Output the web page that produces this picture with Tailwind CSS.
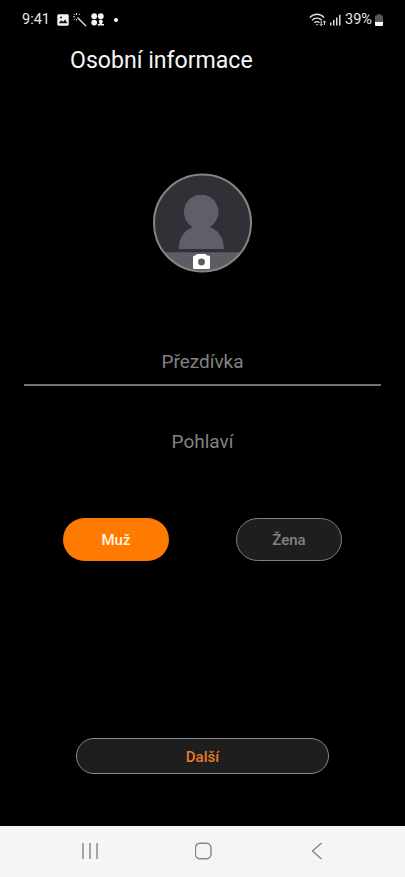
<!DOCTYPE html>
<html lang="cs">
<head>
<meta charset="utf-8">
<title>Osobní informace</title>
<script src="https://cdn.jsdelivr.net/npm/@tailwindcss/browser@4"></script>
</head>
<body class="bg-black">
<div class="flex h-[877px] w-[405px] flex-col overflow-hidden bg-black font-[Roboto,sans-serif]">
  <!-- Status bar -->
  <header class="flex h-[39px] shrink-0 items-center justify-between pr-[22px] pl-[22px] text-[#e6e6e6]">
    <div class="flex items-center">
      <span class="w-[35px] pt-[2px] text-[14.5px] leading-none whitespace-nowrap">9:41</span>
      <svg class="h-3 w-3" viewBox="0 0 12 12"><rect x=".3" y=".3" width="11.4" height="11.4" rx="1.4" fill="#f2f2f2"/><path d="M1.8 9.2 4 6.2 6 7.8 8.2 5.4 10.4 9.2Z" fill="#111"/><circle cx="4" cy="3.4" r="1" fill="#111"/></svg>
      <svg class="ml-[3px] h-[15px] w-[15px]" viewBox="0 0 15 15" fill="none" stroke="#d8d8d8"><path d="M5.5 5.5 14 14" stroke-width="1.5"/><path d="M4.5 1v2M1 4.8h2M1.6 1.8l1.3 1.3M8 1.8 6.8 3M1.8 8l1.3-1.3M4.5 7v1.5" stroke-width="1"/></svg>
      <svg class="ml-1 h-[13px] w-[13px]" viewBox="0 0 13 13" fill="#f2f2f2"><circle cx="3.2" cy="3.2" r="2.9"/><circle cx="9.8" cy="3.2" r="2.9"/><circle cx="3.2" cy="9.6" r="2.9"/><circle cx="9.8" cy="8.5" r="2"/><path d="M9 9h1.6l.7 2H13v1.6H6.8V11h1.5z"/></svg>
      <span class="ml-[10px] h-1 w-1 rounded-full bg-white"></span>
    </div>
    <div class="flex items-center">
      <svg class="h-[14px] w-[18px]" viewBox="0 0 18 14" fill="none" stroke="#e0e0e0" stroke-width="1.4"><path d="M.8 4.6C4.8.2 11.2.2 15.2 4.6M3 7.2c2.8-2.8 7-2.8 9.8 0M5.4 9.7c1.6-1.5 3.6-1.5 5 0"/><path d="M6.8 11 8 12.4 9.2 11Z" fill="#e0e0e0" stroke="none"/><path d="M12.2 8v4.6M10.8 11.2l1.4 1.4 1.4-1.4M15.4 12V8M14 9.3l1.4-1.4 1.4 1.4" stroke-width="1"/></svg>
      <svg class="ml-[3px] h-3 w-[11px]" viewBox="0 0 11 12" fill="#dcdcdc"><rect x="0" y="8.5" width="1.5" height="3"/><rect x="3" y="6" width="1.5" height="5.5"/><rect x="6" y="3.5" width="1.5" height="8"/><rect x="9" y=".8" width="1.5" height="10.7"/></svg>
      <span class="ml-1 w-[29px] pt-[2px] text-[14.5px] leading-none whitespace-nowrap">39%</span>
      <svg class="ml-px h-3 w-2" viewBox="0 0 8 12"><path d="M2.4 0h3.2v1.3H7A1 1 0 0 1 8 2.3V8H0V2.3a1 1 0 0 1 1-1h1.4z" fill="#555"/><path d="M0 8h8v3a1 1 0 0 1-1 1H1a1 1 0 0 1-1-1z" fill="#fff"/></svg>
    </div>
  </header>
  <h1 class="h-[42px] shrink-0 pl-[70px] text-[23.1px] leading-[44px] whitespace-nowrap text-[#f5f5f5]">Osobní informace</h1>

  <main class="flex flex-1 flex-col items-center pt-[92px]">
    <svg class="h-[100px] w-[101px] shrink-0" viewBox="0 0 101 100">
      <defs><clipPath id="disc"><circle cx="50.5" cy="50" r="48.5"/></clipPath></defs>
      <g clip-path="url(#disc)">
        <path d="M0 0h101v100H0z" fill="#303037"/>
        <circle cx="49.2" cy="39" r="17.3" fill="#5f5f69"/>
        <path d="M26.6 76C26.6 64 33.4 56 42.4 53.5h14C65.4 56 71.8 64 71.8 76Z" fill="#5f5f69"/>
        <path d="M0 79.2h101V100H0z" fill="#5c5c65"/>
      </g>
      <path d="M43.5 82.5 45 81h8.5l1.5 1.5h1.5A1.5 1.5 0 0 1 58 84v10.5a1.5 1.5 0 0 1-1.5 1.5h-14a1.5 1.5 0 0 1-1.5-1.5V84a1.5 1.5 0 0 1 1.5-1.5z" fill="#fff"/>
      <circle cx="49.5" cy="89" r="3.4" fill="#5c5c65"/>
      <circle cx="50.5" cy="50" r="48.5" fill="none" stroke="#848484" stroke-width="2.1"/>
    </svg>
    <div class="mt-[65px] flex h-[48px] w-[357px] shrink-0 items-center justify-center border-b-2 border-[#717171] pt-[2px] text-[19px] text-[#828282]">Přezdívka</div>
    <div class="mt-[41px] h-[30px] shrink-0 text-[19px] leading-[30px] text-[#828282]">Pohlaví</div>
    <div class="mt-[61px] flex w-[279px] shrink-0 justify-between text-[15px] font-medium">
      <button class="h-[43px] w-[106px] rounded-full bg-[#ff7a00] pt-px text-[#fff3dc]">Muž</button>
      <button class="h-[43px] w-[106px] rounded-full border border-[#808080] bg-[#1e1e1e] pt-px text-[#828282]">Žena</button>
    </div>
    <button class="mt-[177px] h-[36px] w-[253px] shrink-0 rounded-full border border-[#8a8a8a] bg-[#1e1e1e] pt-[3px] text-[15px] font-medium text-[#e97a2c]">Další</button>
  </main>

  <!-- System navigation -->
  <nav class="flex h-[51px] shrink-0 items-center justify-between bg-[#f5f5f5] pr-[79px] pb-[2px] pl-[81px]">
    <svg class="h-[18px] w-[18px]" viewBox="0 0 18 18" stroke="#858585" stroke-width="1.4"><path d="M2 1v16M9 1v16M16 1v16"/></svg>
    <svg class="h-[18px] w-[18px]" viewBox="0 0 18 18" fill="none" stroke="#858585" stroke-width="1.4"><rect x=".4" y="1.2" width="15.6" height="15.6" rx="4.8"/></svg>
    <svg class="h-[18px] w-[18px]" viewBox="0 0 18 18" fill="none" stroke="#858585" stroke-width="1.4"><path d="m13.5 1-9 8 9 8"/></svg>
  </nav>
</div>
</body>
</html>
